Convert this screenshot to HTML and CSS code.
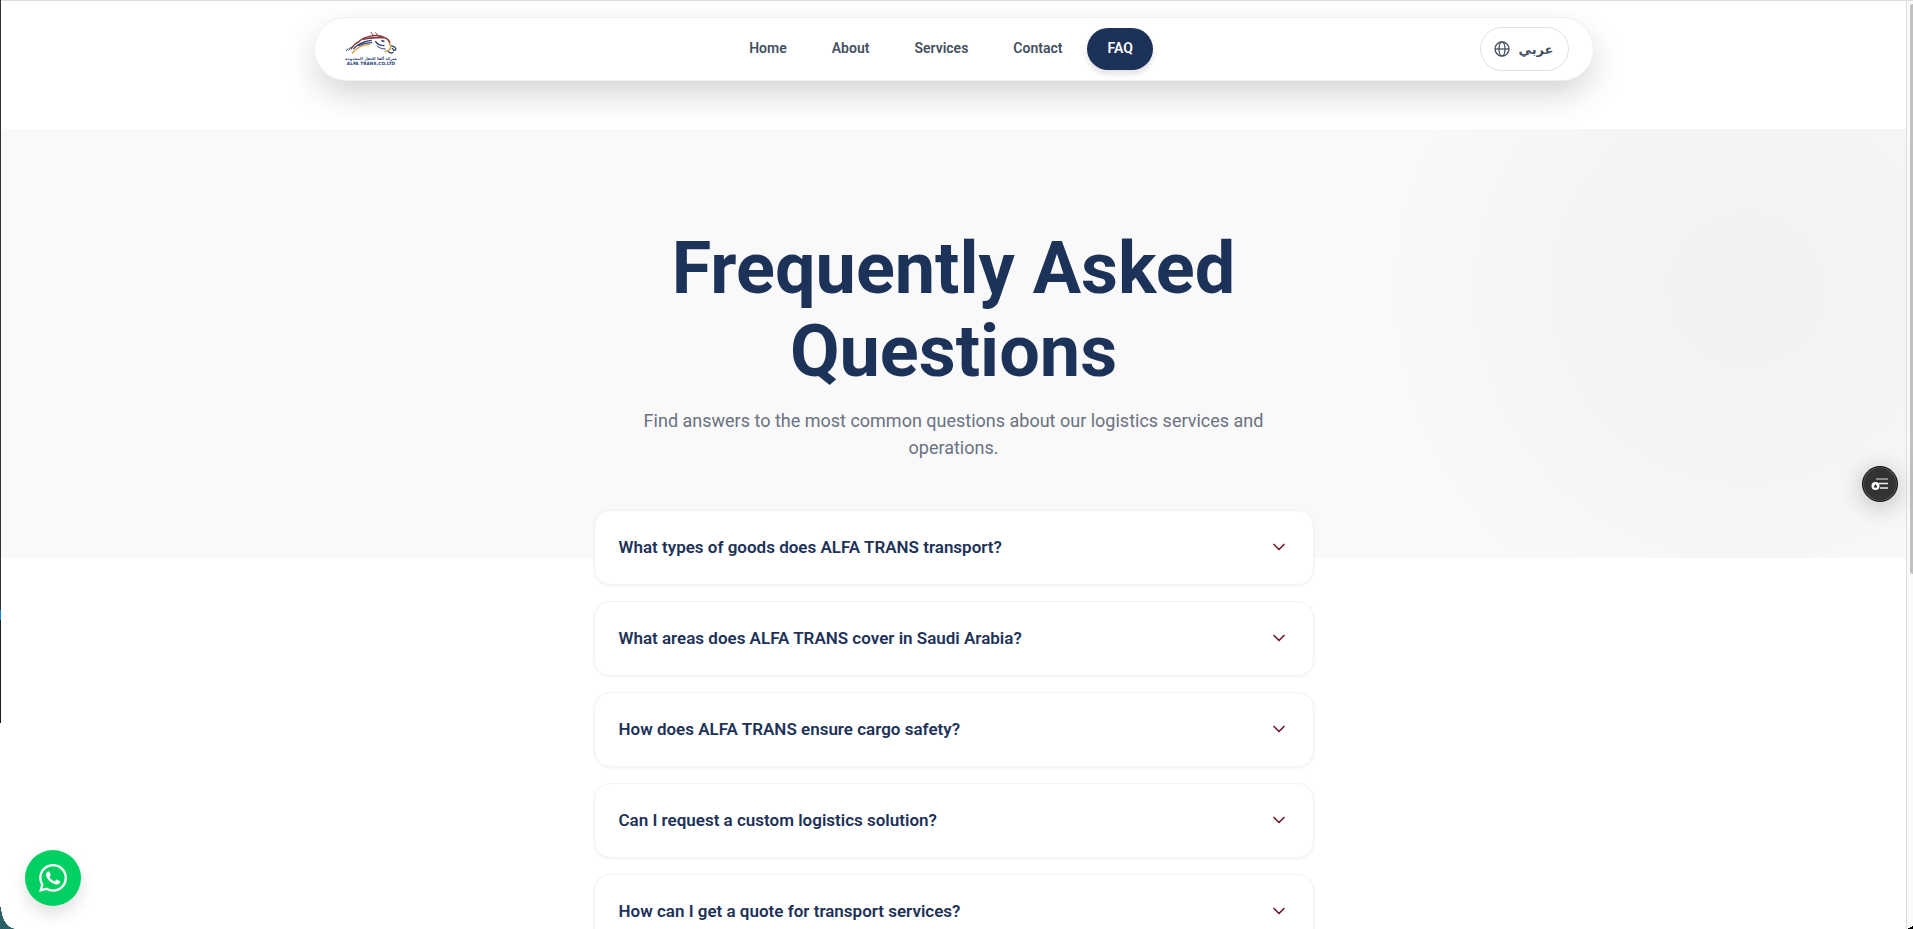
FILE: index.html
```html
<!DOCTYPE html>
<html lang="en">
<head>
  <meta charset="UTF-8">
  <meta name="viewport" content="width=device-width, initial-scale=1">
  <title>FAQ | ALFA TRANS</title>
  <link rel="stylesheet" href="styles.css">
</head>
<body>

<div class="page">

  <header class="header">
    <div class="navbar">
      <a class="logo" href="#" aria-label="ALFA TRANS">
        <svg viewBox="117 81 192 132" fill="none" stroke-linecap="round">
          <!-- mane -->
          <g stroke="#8a3a42" stroke-width="4">
            <path d="M153 147C160 135 168 129 178 124"/>
            <path d="M178 124C194 108 226 103 246 109"/>
            <path d="M190 118C208 111 232 113 254 113C262 116 267 120 269 128" stroke-width="5"/>
            <path d="M213 97L221 107M227 98L235 108L250 110" stroke-width="3"/>
          </g>
          <g stroke="#2b4379" stroke-width="4">
            <path d="M139 152L144 146M147 150L153 141" stroke-width="3"/>
            <path d="M161 146C174 132 190 124 214 121"/>
            <path d="M176 137C188 131 202 128 215 128"/>
            <path d="M227 125C232 133 241 137 252 137"/>
            <path d="M231 138C239 145 248 147 256 147" stroke-width="3"/>
            <path d="M246 122L251 124" stroke-width="5"/>
            <path d="M275 137C282 140 290 143 287 150L281 151M277 145L280 149M264 153C268 159 274 160 279 157"/>
          </g>
          <g stroke="#d49b35" stroke-width="4">
            <path d="M157 159C170 143 187 134 209 133"/>
            <path d="M268 130C274 138 274 144 267 150C263 153 259 155 255 154"/>
          </g>
          <text class="logo-ar" x="213" y="179" text-anchor="middle">شركة ألفا للنقل المحدودة</text>
          <text class="logo-en" x="213" y="196" text-anchor="middle">ALFA TRANS,CO.LTD</text>
        </svg>
      </a>

      <nav class="menu">
        <a href="#">Home</a>
        <a href="#">About</a>
        <a href="#">Services</a>
        <a href="#">Contact</a>
        <a class="active" href="#">FAQ</a>
      </nav>

      <button class="lang" type="button">
        <svg viewBox="0 0 24 24" fill="none" stroke="currentColor" stroke-width="2">
          <circle cx="12" cy="12" r="10.5"/>
          <ellipse cx="12" cy="12" rx="4.5" ry="10.5"/>
          <path d="M1.5 12h21"/>
        </svg>
        <span lang="ar">عربي</span>
      </button>
    </div>
  </header>

  <section class="hero">
    <div class="hero-text">
      <h1>Frequently Asked Questions</h1>
      <p>Find answers to the most common questions about our logistics services and operations.</p>
    </div>
  </section>

  <main class="faq">
    <button class="question" type="button" aria-expanded="false">
      <span>What types of goods does ALFA TRANS transport?</span>
      <svg viewBox="0 0 24 24"><path d="M6 9l6 6 6-6"/></svg>
    </button>
    <button class="question" type="button" aria-expanded="false">
      <span>What areas does ALFA TRANS cover in Saudi Arabia?</span>
      <svg viewBox="0 0 24 24"><path d="M6 9l6 6 6-6"/></svg>
    </button>
    <button class="question" type="button" aria-expanded="false">
      <span>How does ALFA TRANS ensure cargo safety?</span>
      <svg viewBox="0 0 24 24"><path d="M6 9l6 6 6-6"/></svg>
    </button>
    <button class="question" type="button" aria-expanded="false">
      <span>Can I request a custom logistics solution?</span>
      <svg viewBox="0 0 24 24"><path d="M6 9l6 6 6-6"/></svg>
    </button>
    <button class="question" type="button" aria-expanded="false">
      <span>How can I get a quote for transport services?</span>
      <svg viewBox="0 0 24 24"><path d="M6 9l6 6 6-6"/></svg>
    </button>
  </main>

</div>

<!-- scrollbar -->
<div class="scrollbar"><div class="thumb"></div></div>

<!-- floating buttons -->
<a class="whatsapp" href="#" aria-label="WhatsApp">
  <svg viewBox="0 0 24 24" fill="#fff">
    <path d="M17.472 14.382c-.297-.149-1.758-.867-2.03-.967-.273-.099-.471-.148-.67.15-.197.297-.767.966-.94 1.164-.173.199-.347.223-.644.075-.297-.15-1.255-.463-2.39-1.475-.883-.788-1.48-1.761-1.653-2.059-.173-.297-.018-.458.13-.606.134-.133.298-.347.446-.52.149-.174.198-.298.298-.497.099-.198.05-.371-.025-.52-.075-.149-.669-1.612-.916-2.207-.242-.579-.487-.5-.669-.51-.173-.008-.371-.01-.57-.01-.198 0-.52.074-.792.372-.272.297-1.04 1.016-1.04 2.479 0 1.462 1.065 2.875 1.213 3.074.149.198 2.096 3.2 5.077 4.487.709.306 1.262.489 1.694.625.712.227 1.36.195 1.871.118.571-.085 1.758-.719 2.006-1.413.248-.694.248-1.289.173-1.413-.074-.124-.272-.198-.57-.347m-5.421 7.403h-.004a9.87 9.87 0 01-5.031-1.378l-.361-.214-3.741.982.998-3.648-.235-.374a9.86 9.86 0 01-1.51-5.26c.001-5.45 4.436-9.884 9.888-9.884 2.64 0 5.122 1.03 6.988 2.898a9.825 9.825 0 012.893 6.994c-.003 5.45-4.437 9.884-9.885 9.884m8.413-18.297A11.815 11.815 0 0012.05 0C5.495 0 .16 5.335.157 11.892c0 2.096.547 4.142 1.588 5.945L.057 24l6.305-1.654a11.882 11.882 0 005.683 1.448h.005c6.554 0 11.89-5.335 11.893-11.893a11.821 11.821 0 00-3.48-8.413z"/>
  </svg>
</a>

<button class="widget" type="button" aria-label="Open list">
  <svg viewBox="0 0 18 12">
    <path d="M5 1h12" stroke="#aaa" stroke-width="1.5"/>
    <path d="M8 5.500h9M9 10h8" stroke="#eee" stroke-width="1.5"/>
    <circle cx="4.500" cy="8" r="4" fill="#fff"/>
    <path d="M4.500 6l2 3.500h-4z" fill="#222"/>
  </svg>
</button>

<!-- window edges -->
<div class="edge"></div>
<div class="corner corner-left"></div>
<div class="corner corner-right"></div>

</body>
</html>
```
FILE: styles.css
```css
* {
  box-sizing: border-box;
  margin: 0;
  padding: 0;
}

body {
  height: 100vh;
  overflow: hidden;
  display: flex;
  border-top: 1px solid #ddd;
  background-color: #fff;
  font-family: Roboto, "Noto Sans", sans-serif;
  color: #1d3258;
}

button {
  font-family: inherit;
  cursor: pointer;
}

a {
  text-decoration: none;
}

.page {
  flex: 1;
  min-width: 0;
  overflow: hidden;
  padding-left: 1px;
}

/* header */
.header {
  height: 128px;
  padding: 16px 24px 0;
}

.navbar {
  display: flex;
  align-items: center;
  justify-content: space-between;
  max-width: 1280px;
  height: 64px;
  margin: 0 auto;
  padding: 0 24px;
  border: 1px solid #f0f0f1;
  border-radius: 32px;
  background-color: #fff;
  box-shadow: 0 14px 36px -4px rgba(0, 0, 0, .2);
}

.logo svg {
  display: block;
  width: 64px;
  height: 44px;
}

.logo text {
  fill: #2b4379;
  font-weight: 700;
}

.logo-ar {
  font-family: "DejaVu Sans", sans-serif;
  font-size: 12px;
}

.logo-en {
  font-family: "DejaVu Sans", sans-serif;
  font-size: 13px;
}

.menu {
  display: flex;
  gap: 5px;
}

.menu a {
  padding: 0 20px 2px;
  border-radius: 21px;
  font-size: 14px;
  font-weight: 600;
  line-height: 40px;
  color: #445062;
}

.menu .active {
  background-color: #1d3258;
  color: #fff;
  box-shadow: 0 4px 6px rgba(0, 0, 0, .12);
}

.lang {
  display: flex;
  align-items: center;
  justify-content: center;
  gap: 8px;
  width: 89px;
  height: 44px;
  border: 1px solid #e0e0e6;
  border-radius: 22px;
  background-color: #fff;
  font-family: "DejaVu Sans", sans-serif;
  font-size: 13px;
  font-weight: 700;
  color: #445062;
}

.lang svg {
  width: 16px;
  height: 16px;
}

/* hero */
.hero {
  height: 429px;
  padding: 98px 24px 0;
  background: radial-gradient(circle 350px at calc(100% - 160px) 160px, #f3f0f2, #f5f4f5 45%, #f9f9f9) #f9f9f9;
}

.hero-text {
  max-width: 672px;
  margin: 0 auto;
  text-align: center;
}

.hero h1 {
  font-size: 72px;
  font-weight: 700;
  line-height: 83px;
}

.hero p {
  margin-top: 14px;
  font-size: 18px;
  line-height: 27px;
  color: #6a7282;
}

/* questions, the first one overlaps the hero */
.faq {
  display: flex;
  flex-direction: column;
  gap: 16px;
  max-width: 720px;
  margin: -48px auto 0;
}

.question {
  display: flex;
  align-items: center;
  justify-content: space-between;
  height: 75px;
  padding: 0 24px 2px;
  border: 1px solid #f3f4f6;
  border-radius: 16px;
  background-color: #fff;
  box-shadow: 0 1px 3px rgba(0, 0, 0, .06);
  font-size: 17px;
  font-weight: 600;
  text-align: left;
  color: #1d3258;
}

.question svg {
  width: 20px;
  height: 20px;
  fill: none;
  stroke: #6d1a2b;
  stroke-width: 2;
  stroke-linecap: round;
  stroke-linejoin: round;
}

/* scrollbar */
.scrollbar {
  width: 7px;
  border-left: 1px solid #ddd;
  background-color: #fafafa;
}

.thumb {
  height: 570px;
  margin: 3px 0 0 3px;
  border-radius: 4px 0 0 4px;
  background-color: #c1c1c1;
}

/* floating buttons */
.whatsapp {
  position: fixed;
  left: 25px;
  bottom: 23px;
  display: flex;
  align-items: center;
  justify-content: center;
  width: 56px;
  height: 56px;
  border-radius: 50%;
  background-color: #00d062;
  box-shadow: 0 8px 16px rgba(0, 0, 0, .12);
}

.whatsapp svg {
  width: 28px;
  height: 28px;
}

.widget {
  position: fixed;
  top: 466px;
  right: 15px;
  display: flex;
  align-items: center;
  justify-content: center;
  width: 36px;
  height: 36px;
  border: 1px solid #111;
  border-radius: 50%;
  background-color: #333;
  box-shadow: inset 0 0 0 1px #555, 0 4px 24px rgba(0, 0, 0, .25);
}

.widget svg {
  width: 18px;
  height: 12px;
}

/* window edges */
.edge {
  position: fixed;
  top: 0;
  left: 0;
  width: 1px;
  height: 723px;
  background: linear-gradient(#333 610px, #1787e0 610px, #1787e0 620px, #14211f 620px);
}

.corner {
  position: fixed;
  bottom: 0;
}

.corner-left {
  left: 0;
  width: 16px;
  height: 22px;
  background: radial-gradient(ellipse 15px 22px at 100% 0, transparent 98%, #2a6066);
}

.corner-right {
  right: 0;
  width: 6px;
  height: 3px;
  background: linear-gradient(to bottom right, transparent 50%, #000 50%);
}
```
